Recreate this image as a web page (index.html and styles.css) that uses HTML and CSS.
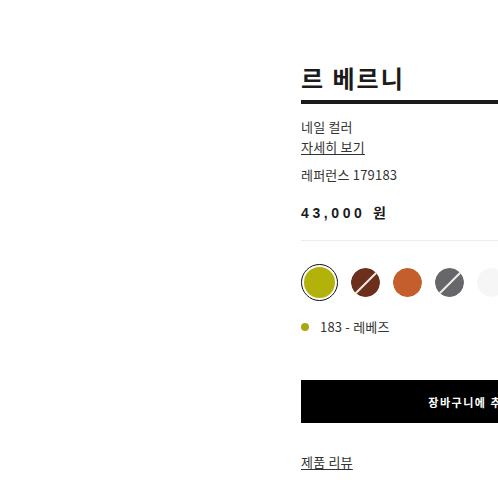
FILE: index.html
```html
<!DOCTYPE html>
<html>
<head>
	<title>르 베르니</title>
	<link rel="stylesheet" href="styles.css">
</head>
<body>

<div class="pagina">
  <div class="galeria"></div>

  <div class="producto">
    <h1 class="titulo">르 베르니</h1>

    <p class="categoria">네일 컬러</p>
    <a class="enlace detalle" href="#">자세히 보기</a>
    <p class="referencia">레퍼런스 179183</p>

    <p class="precio">43,000 <span class="moneda">원</span></p>

    <ul class="colores">
      <li class="color activo"><span style="background:#b3b20b"></span></li>
      <li class="color tachado"><span style="background:#6c2f1b"></span></li>
      <li class="color"><span style="background:#c45e2c"></span></li>
      <li class="color tachado"><span style="background:#67676b"></span></li>
      <li class="color"><span style="background:#f6f6f6"></span></li>
    </ul>

    <p class="seleccion"><span class="punto"></span>183 - 레베즈</p>

    <button class="boton">장바구니에 추가</button>

    <a class="enlace resenas" href="#">제품 리뷰</a>
  </div>
</div>

</body>
</html>
```

FILE: styles.css
```css
html, body {
    margin: 0;
    padding: 0;
    background: #fff;
    overflow: hidden;
}

body {
    font-family: "Noto Sans CJK KR", "Noto Sans", sans-serif;
    color: #333;
}

.pagina {
    display: flex;
    width: 660px;
}

.galeria {
    width: 301px;
    flex-shrink: 0;
}

.producto {
    width: 340px;
    padding-top: 60px;
    font-size: 13px;
    line-height: 18px;
    letter-spacing: 0.2px;
}

.titulo {
    margin: 0;
    font-size: 24px;
    line-height: 36px;
    font-weight: 700;
    letter-spacing: 2px;
    color: #1b1b1b;
    padding-bottom: 4px;
    border-bottom: 4px solid #1b1b1b;
}

.categoria {
    margin: 14px 0 0;
}

.enlace {
    display: inline-block;
    color: #333;
    text-decoration: underline;
    text-underline-offset: 2px;
}

.detalle {
    margin-top: 2px;
}

.referencia {
    margin: 10px 0 0;
}

.precio {
    margin: 18px 0 0;
    padding-bottom: 17px;
    border-bottom: 1px solid #ececec;
    font-family: "Liberation Sans", sans-serif;
    font-size: 14px;
    line-height: 20px;
    font-weight: 700;
    letter-spacing: 3.6px;
    color: #1b1b1b;
}

.moneda {
    font-family: "Noto Sans CJK KR", sans-serif;
    letter-spacing: 0;
}

.colores {
    list-style-type: none;
    margin: 23px 0 0;
    padding: 0;
    display: flex;
    align-items: center;
    gap: 13px;
}

.color {
    width: 29px;
    height: 29px;
    border-radius: 50%;
    position: relative;
    overflow: hidden;
}

.color span {
    display: block;
    width: 100%;
    height: 100%;
    border-radius: 50%;
}

.color.activo {
    width: 31px;
    height: 31px;
    padding: 2px;
    border: 1.5px solid #111;
}

.color.tachado:after {
    content: "";
    position: absolute;
    left: 50%;
    top: -2px;
    width: 2px;
    height: 34px;
    margin-left: -1px;
    background: #f2ece4;
    transform: rotate(45deg);
}

.seleccion {
    margin: 17px 0 0;
    display: flex;
    align-items: center;
}

.punto {
    width: 8px;
    height: 8px;
    border-radius: 50%;
    background: #a9a812;
    margin: 0 11px 0 0;
}

.boton {
    display: block;
    width: 340px;
    height: 43px;
    margin-top: 44px;
    border: 0;
    background: #000;
    color: #fff;
    font-family: "Noto Sans CJK KR", sans-serif;
    font-size: 11px;
    font-weight: 700;
    letter-spacing: 1.5px;
}

.resenas {
    margin-top: 30px;
}
```
